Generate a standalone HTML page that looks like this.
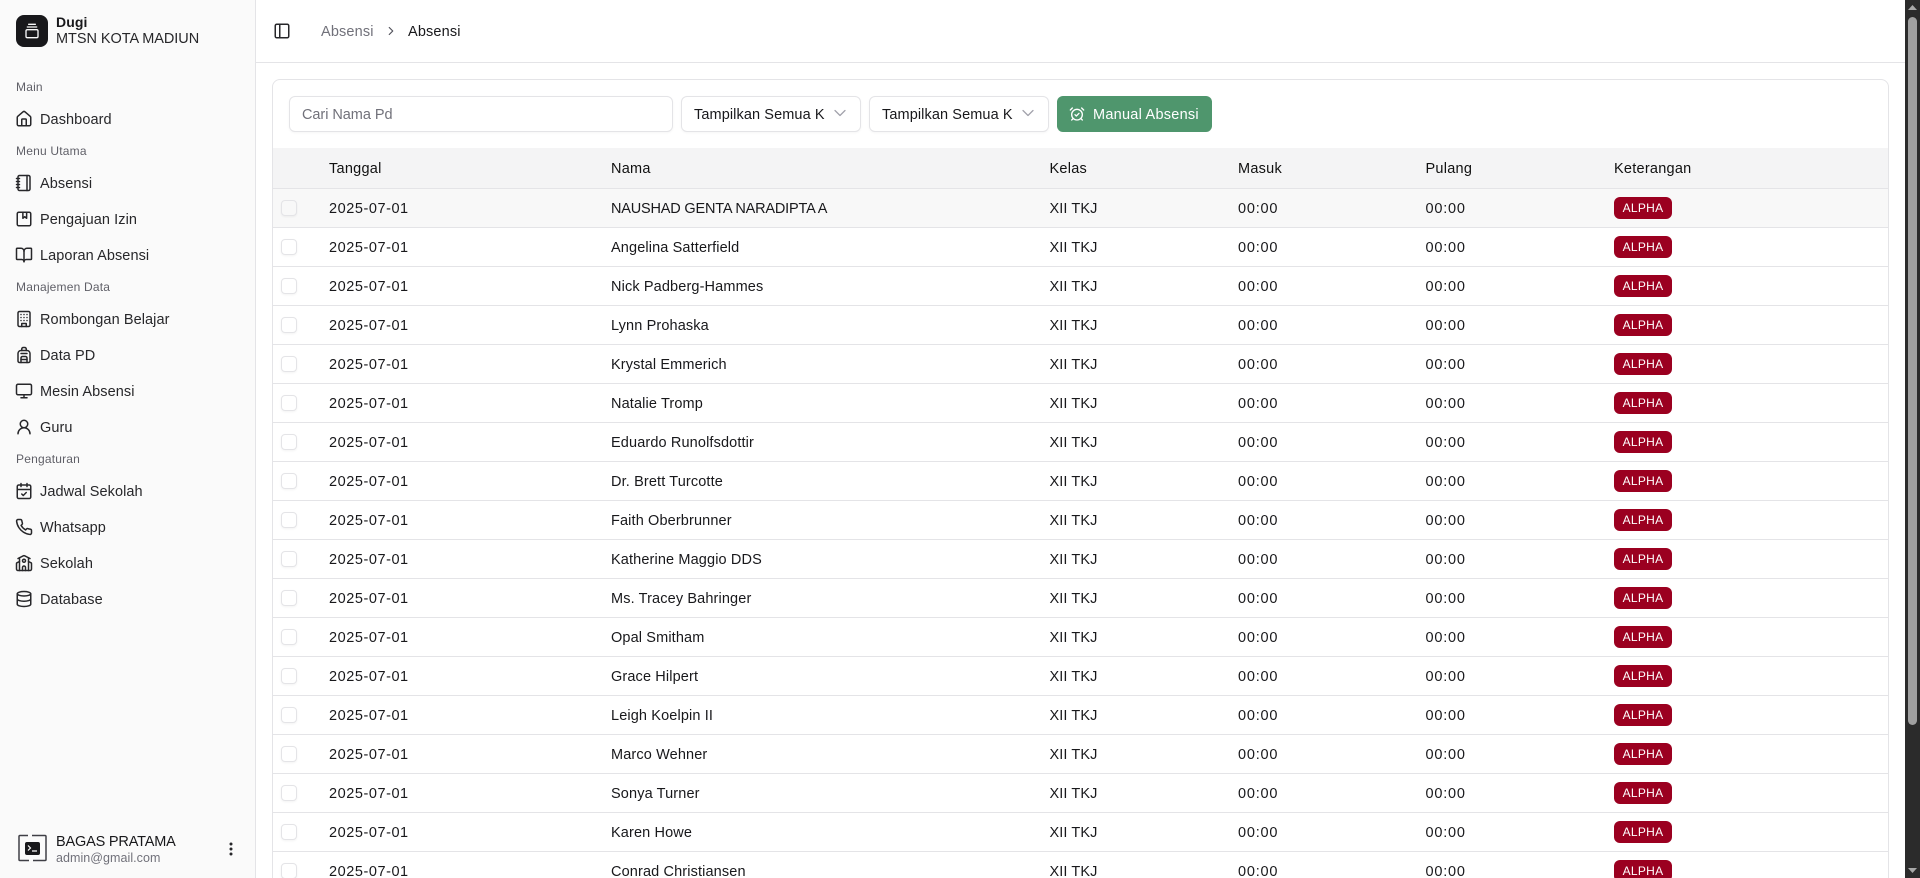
<!DOCTYPE html>
<html lang="id">
<head>
<meta charset="utf-8">
<title>Absensi</title>
<style>
*{box-sizing:border-box}
html,body{margin:0;padding:0;width:1920px;height:878px;overflow:hidden;background:#fff}
body{font-family:"Liberation Sans",sans-serif;color:#18181b;font-size:14.5px;letter-spacing:.25px;position:relative}
svg.i{position:absolute;fill:none;stroke:#27272a;stroke-width:2;stroke-linecap:round;stroke-linejoin:round}
svg.s{width:18px;height:18px;left:15px}
.t{position:absolute;white-space:nowrap;line-height:20px;margin-top:1px}
#side{position:absolute;left:0;top:0;width:256px;height:878px;background:#fafafa;border-right:1px solid #e4e4e7}
.l{position:absolute;left:16px;font-size:12px;color:#5f5f67;line-height:16px;white-space:nowrap;letter-spacing:.2px}
.m{position:absolute;left:40px;line-height:20px;white-space:nowrap;color:#27272a;margin-top:1px;letter-spacing:.08px}
#hdr{position:absolute;left:256px;top:62px;width:1649px;height:1px;background:#e4e4e7}
#card{position:absolute;left:272px;top:79px;width:1617px;height:830px;border:1px solid #e4e4e7;border-radius:8px;background:#fff;overflow:hidden}
.box{position:absolute;top:96px;height:36px;border:1px solid #e4e4e7;border-radius:6px;background:#fff;box-shadow:0 1px 2px rgba(0,0,0,.04)}
#btn{position:absolute;left:1057px;top:96px;width:155px;height:36px;background:#4f966d;border-radius:6px}
#tb{position:absolute;left:273px;top:148px;width:1615px}
table{border-collapse:collapse;table-layout:fixed;width:1615px;font-size:14.5px}
th,td{height:39px;padding:0;text-align:left;font-weight:400;white-space:nowrap;border-bottom:1px solid #e4e4e7;color:#18181b}
th{height:40.5px;background:#f4f4f5;color:#111}
td:first-child,th:first-child{position:relative}
th:nth-child(n+2):nth-child(-n+7),td:nth-child(n+2):nth-child(-n+6){padding-top:2px}
td:nth-child(2){letter-spacing:.55px}
td:nth-child(3){letter-spacing:.13px}
td:nth-child(4){letter-spacing:.1px}
td:nth-child(5),td:nth-child(6){letter-spacing:.8px}
.c{position:absolute;left:8px;top:11px;width:16px;height:16px;border:1px solid #e4e4e7;border-radius:4px;background:#fff;box-shadow:0 1px 2px rgba(0,0,0,.05)}
tr.h td{background:#f8f8f8}
tr.h .c{background:#f8f8f8}
tr.h td:nth-child(3){letter-spacing:-.19px}
.b{display:inline-block;width:58px;height:22px;line-height:22px;background:#9b0020;color:#fff;border-radius:6px;font-size:12px;text-align:center;vertical-align:middle;letter-spacing:.3px}
#sb{position:absolute;left:1905px;top:0;width:15px;height:878px;background:#2b2b2b}
</style>
</head>
<body>
<div id="side">
  <div style="position:absolute;left:16px;top:15px;width:32px;height:32px;border-radius:8px;background:#18181b"></div>
  <svg class="i" style="left:24px;top:23px;stroke:#fafafa" width="16" height="16" viewBox="0 0 24 24"><path d="M7 2h10"/><path d="M5 6h14"/><rect width="18" height="12" x="3" y="10" rx="2"/></svg>
  <div class="t" style="left:56px;top:12px;font-weight:700;font-size:14px;letter-spacing:.1px;line-height:18px;color:#18181b">Dugi</div>
  <div class="t" style="left:56px;top:29px;line-height:18px;letter-spacing:-.05px;color:#27272a">MTSN KOTA MADIUN</div>

  <div class="l" style="top:79px">Main</div>
  <svg class="i s" style="top:110px" viewBox="0 0 24 24"><path d="M15 21v-8a1 1 0 0 0-1-1h-4a1 1 0 0 0-1 1v8"/><path d="M3 10a2 2 0 0 1 .709-1.528l7-5.999a2 2 0 0 1 2.582 0l7 5.999A2 2 0 0 1 21 10v9a2 2 0 0 1-2 2H5a2 2 0 0 1-2-2z"/></svg>
  <div class="m" style="top:109px">Dashboard</div>

  <div class="l" style="top:143px">Menu Utama</div>
  <svg class="i s" style="top:174px" viewBox="0 0 24 24"><path d="M2 6h4"/><path d="M2 10h4"/><path d="M2 14h4"/><path d="M2 18h4"/><rect width="16" height="20" x="4" y="2" rx="2"/><path d="M16 2v20"/></svg>
  <div class="m" style="top:173px">Absensi</div>
  <svg class="i s" style="top:210px" viewBox="0 0 24 24"><rect x="3" y="3" width="18" height="18" rx="2"/><path d="M10.500 3v8l2.500-2 2.500 2V3"/></svg>
  <div class="m" style="top:209px">Pengajuan Izin</div>
  <svg class="i s" style="top:246px" viewBox="0 0 24 24"><path d="M12 7v14"/><path d="M3 18a1 1 0 0 1-1-1V4a1 1 0 0 1 1-1h5a4 4 0 0 1 4 4 4 4 0 0 1 4-4h5a1 1 0 0 1 1 1v13a1 1 0 0 1-1 1h-6a3 3 0 0 0-3 3 3 3 0 0 0-3-3z"/></svg>
  <div class="m" style="top:245px">Laporan Absensi</div>

  <div class="l" style="top:279px">Manajemen Data</div>
  <svg class="i s" style="top:310px" viewBox="0 0 24 24"><rect width="16" height="20" x="4" y="2" rx="2"/><path d="M9 22v-4h6v4"/><path d="M8 6h.01M16 6h.01M12 6h.01M12 10h.01M12 14h.01M16 10h.01M16 14h.01M8 10h.01M8 14h.01"/></svg>
  <div class="m" style="top:309px">Rombongan Belajar</div>
  <svg class="i s" style="top:346px" viewBox="0 0 24 24"><path d="M4 10a4 4 0 0 1 4-4h8a4 4 0 0 1 4 4v10a2 2 0 0 1-2 2H6a2 2 0 0 1-2-2z"/><path d="M8 10h8"/><path d="M8 18h8"/><path d="M8 22v-6a2 2 0 0 1 2-2h4a2 2 0 0 1 2 2v6"/><path d="M9 6V4a2 2 0 0 1 2-2h2a2 2 0 0 1 2 2v2"/></svg>
  <div class="m" style="top:345px">Data PD</div>
  <svg class="i s" style="top:382px" viewBox="0 0 24 24"><rect width="20" height="14" x="2" y="3" rx="2"/><path d="M8 21h8"/><path d="M12 17v4"/></svg>
  <div class="m" style="top:381px">Mesin Absensi</div>
  <svg class="i s" style="top:418px" viewBox="0 0 24 24"><circle cx="12" cy="8" r="5"/><path d="M20 21a8 8 0 0 0-16 0"/></svg>
  <div class="m" style="top:417px">Guru</div>

  <div class="l" style="top:451px">Pengaturan</div>
  <svg class="i s" style="top:482px" viewBox="0 0 24 24"><path d="M8 2v4"/><path d="M16 2v4"/><rect width="18" height="18" x="3" y="4" rx="2"/><path d="M3 10h18"/><path d="m9 16 2 2 4-4"/></svg>
  <div class="m" style="top:481px">Jadwal Sekolah</div>
  <svg class="i s" style="top:518px" viewBox="0 0 24 24"><path d="M22 16.920v3a2 2 0 0 1-2.180 2 19.790 19.790 0 0 1-8.630-3.070 19.500 19.500 0 0 1-6-6 19.790 19.790 0 0 1-3.070-8.670A2 2 0 0 1 4.110 2h3a2 2 0 0 1 2 1.720 12.840 12.840 0 0 0 .7 2.810 2 2 0 0 1-.45 2.110L8.090 9.910a16 16 0 0 0 6 6l1.270-1.270a2 2 0 0 1 2.110-.45 12.840 12.840 0 0 0 2.810.7A2 2 0 0 1 22 16.920z"/></svg>
  <div class="m" style="top:517px">Whatsapp</div>
  <svg class="i s" style="top:554px" viewBox="0 0 24 24"><path d="M14 22v-4a2 2 0 1 0-4 0v4"/><path d="m18 10 3.447 1.724a1 1 0 0 1 .553.894V20a2 2 0 0 1-2 2H4a2 2 0 0 1-2-2v-7.382a1 1 0 0 1 .553-.894L6 10"/><path d="M18 5v17"/><path d="m4 6 7.106-3.553a2 2 0 0 1 1.788 0L20 6"/><path d="M6 5v17"/><circle cx="12" cy="9" r="2"/></svg>
  <div class="m" style="top:553px">Sekolah</div>
  <svg class="i s" style="top:590px" viewBox="0 0 24 24"><ellipse cx="12" cy="5" rx="9" ry="3"/><path d="M3 5V19A9 3 0 0 0 21 19V5"/><path d="M3 12A9 3 0 0 0 21 12"/></svg>
  <div class="m" style="top:589px">Database</div>

  <svg style="position:absolute;left:17px;top:833px" width="31" height="31" viewBox="0 0 31 31" fill="none"><path d="M11 2.500H3a1 1 0 0 0-1 1v23a1 1 0 0 0 1 1h9M15 2.500h13a1 1 0 0 1 1 1v23a1 1 0 0 1-1 1H16" stroke="#3f3f46" stroke-width="1.500"/><rect x="8" y="9" width="15" height="13" rx="2" fill="#18181b"/><path d="M11 12.500l2.500 2.500-2.500 2.500M15 18h5" stroke="#fff" stroke-width="1.200" fill="none"/></svg>
  <div class="t" style="left:56px;top:831px;color:#18181b;letter-spacing:-.18px">BAGAS PRATAMA</div>
  <div class="t" style="left:56px;top:847px;font-size:12.500px;color:#71717a;letter-spacing:.05px">admin@gmail.com</div>
  <svg style="position:absolute;left:227px;top:841px" width="8" height="16" viewBox="0 0 8 16" fill="#27272a"><circle cx="4" cy="3" r="1.500"/><circle cx="4" cy="8" r="1.500"/><circle cx="4" cy="13" r="1.500"/></svg>
</div>

<svg class="i" style="left:273px;top:22px" width="18" height="18" viewBox="0 0 24 24"><rect width="18" height="18" x="3" y="3" rx="2"/><path d="M9 3v18"/></svg>
<div class="t" style="left:321px;top:21px;color:#71717a;letter-spacing:.15px">Absensi</div>
<svg class="i" style="left:384px;top:24px;stroke:#52525b" width="14" height="14" viewBox="0 0 24 24"><path d="m9 18 6-6-6-6"/></svg>
<div class="t" style="left:408px;top:21px;color:#18181b;letter-spacing:.15px">Absensi</div>
<div id="hdr"></div>

<div id="card"></div>
<div class="box" style="left:289px;width:384px"></div>
<div class="t" style="left:302px;top:104px;color:#71717a;letter-spacing:-.05px">Cari Nama Pd</div>
<div class="box" style="left:681px;width:180px"></div>
<div class="t" style="left:694px;top:104px;letter-spacing:.1px">Tampilkan Semua K</div>
<svg class="i" style="left:830px;top:103px;stroke:#a1a1aa;stroke-width:1.500" width="20" height="20" viewBox="0 0 24 24"><path d="m6 9 6 6 6-6"/></svg>
<div class="box" style="left:869px;width:180px"></div>
<div class="t" style="left:882px;top:104px;letter-spacing:.1px">Tampilkan Semua K</div>
<svg class="i" style="left:1018px;top:103px;stroke:#a1a1aa;stroke-width:1.500" width="20" height="20" viewBox="0 0 24 24"><path d="m6 9 6 6 6-6"/></svg>
<div id="btn"></div>
<svg class="i" style="left:1069px;top:106px;stroke:#fff" width="16" height="16" viewBox="0 0 24 24"><circle cx="12" cy="13" r="8"/><path d="M5 3 2 6"/><path d="m22 6-3-3"/><path d="M6.380 18.700 4 21"/><path d="M17.640 18.670 20 21"/><path d="m9 13 2 2 4-4"/></svg>
<div class="t" style="left:1093px;top:104px;color:#fff">Manual Absensi</div>

<div id="tb">
<table>
<colgroup><col style="width:56px"><col style="width:282px"><col style="width:438.500px"><col style="width:188.500px"><col style="width:187.500px"><col style="width:188.500px"><col></colgroup>
<tr><th></th><th>Tanggal</th><th>Nama</th><th>Kelas</th><th>Masuk</th><th>Pulang</th><th>Keterangan</th></tr>
<tr class="h"><td><span class="c"></span></td><td>2025-07-01</td><td>NAUSHAD GENTA NARADIPTA A</td><td>XII TKJ</td><td>00:00</td><td>00:00</td><td><span class="b">ALPHA</span></td></tr>
<tr><td><span class="c"></span></td><td>2025-07-01</td><td>Angelina Satterfield</td><td>XII TKJ</td><td>00:00</td><td>00:00</td><td><span class="b">ALPHA</span></td></tr>
<tr><td><span class="c"></span></td><td>2025-07-01</td><td>Nick Padberg-Hammes</td><td>XII TKJ</td><td>00:00</td><td>00:00</td><td><span class="b">ALPHA</span></td></tr>
<tr><td><span class="c"></span></td><td>2025-07-01</td><td>Lynn Prohaska</td><td>XII TKJ</td><td>00:00</td><td>00:00</td><td><span class="b">ALPHA</span></td></tr>
<tr><td><span class="c"></span></td><td>2025-07-01</td><td>Krystal Emmerich</td><td>XII TKJ</td><td>00:00</td><td>00:00</td><td><span class="b">ALPHA</span></td></tr>
<tr><td><span class="c"></span></td><td>2025-07-01</td><td>Natalie Tromp</td><td>XII TKJ</td><td>00:00</td><td>00:00</td><td><span class="b">ALPHA</span></td></tr>
<tr><td><span class="c"></span></td><td>2025-07-01</td><td>Eduardo Runolfsdottir</td><td>XII TKJ</td><td>00:00</td><td>00:00</td><td><span class="b">ALPHA</span></td></tr>
<tr><td><span class="c"></span></td><td>2025-07-01</td><td>Dr. Brett Turcotte</td><td>XII TKJ</td><td>00:00</td><td>00:00</td><td><span class="b">ALPHA</span></td></tr>
<tr><td><span class="c"></span></td><td>2025-07-01</td><td>Faith Oberbrunner</td><td>XII TKJ</td><td>00:00</td><td>00:00</td><td><span class="b">ALPHA</span></td></tr>
<tr><td><span class="c"></span></td><td>2025-07-01</td><td>Katherine Maggio DDS</td><td>XII TKJ</td><td>00:00</td><td>00:00</td><td><span class="b">ALPHA</span></td></tr>
<tr><td><span class="c"></span></td><td>2025-07-01</td><td>Ms. Tracey Bahringer</td><td>XII TKJ</td><td>00:00</td><td>00:00</td><td><span class="b">ALPHA</span></td></tr>
<tr><td><span class="c"></span></td><td>2025-07-01</td><td>Opal Smitham</td><td>XII TKJ</td><td>00:00</td><td>00:00</td><td><span class="b">ALPHA</span></td></tr>
<tr><td><span class="c"></span></td><td>2025-07-01</td><td>Grace Hilpert</td><td>XII TKJ</td><td>00:00</td><td>00:00</td><td><span class="b">ALPHA</span></td></tr>
<tr><td><span class="c"></span></td><td>2025-07-01</td><td>Leigh Koelpin II</td><td>XII TKJ</td><td>00:00</td><td>00:00</td><td><span class="b">ALPHA</span></td></tr>
<tr><td><span class="c"></span></td><td>2025-07-01</td><td>Marco Wehner</td><td>XII TKJ</td><td>00:00</td><td>00:00</td><td><span class="b">ALPHA</span></td></tr>
<tr><td><span class="c"></span></td><td>2025-07-01</td><td>Sonya Turner</td><td>XII TKJ</td><td>00:00</td><td>00:00</td><td><span class="b">ALPHA</span></td></tr>
<tr><td><span class="c"></span></td><td>2025-07-01</td><td>Karen Howe</td><td>XII TKJ</td><td>00:00</td><td>00:00</td><td><span class="b">ALPHA</span></td></tr>
<tr><td><span class="c"></span></td><td>2025-07-01</td><td>Conrad Christiansen</td><td>XII TKJ</td><td>00:00</td><td>00:00</td><td><span class="b">ALPHA</span></td></tr>
</table>
</div>

<div id="sb">
  <svg style="position:absolute;left:3px;top:5px" width="9" height="6"><path d="M4.500 0L9 5H0z" fill="#a8a8a8"/></svg>
  <div style="position:absolute;left:3px;top:17px;width:9px;height:708px;border-radius:5px;background:#a0a0a0"></div>
  <svg style="position:absolute;left:3px;top:868px" width="9" height="6"><path d="M0 0H9L4.500 5z" fill="#a8a8a8"/></svg>
</div>
</body>
</html>
